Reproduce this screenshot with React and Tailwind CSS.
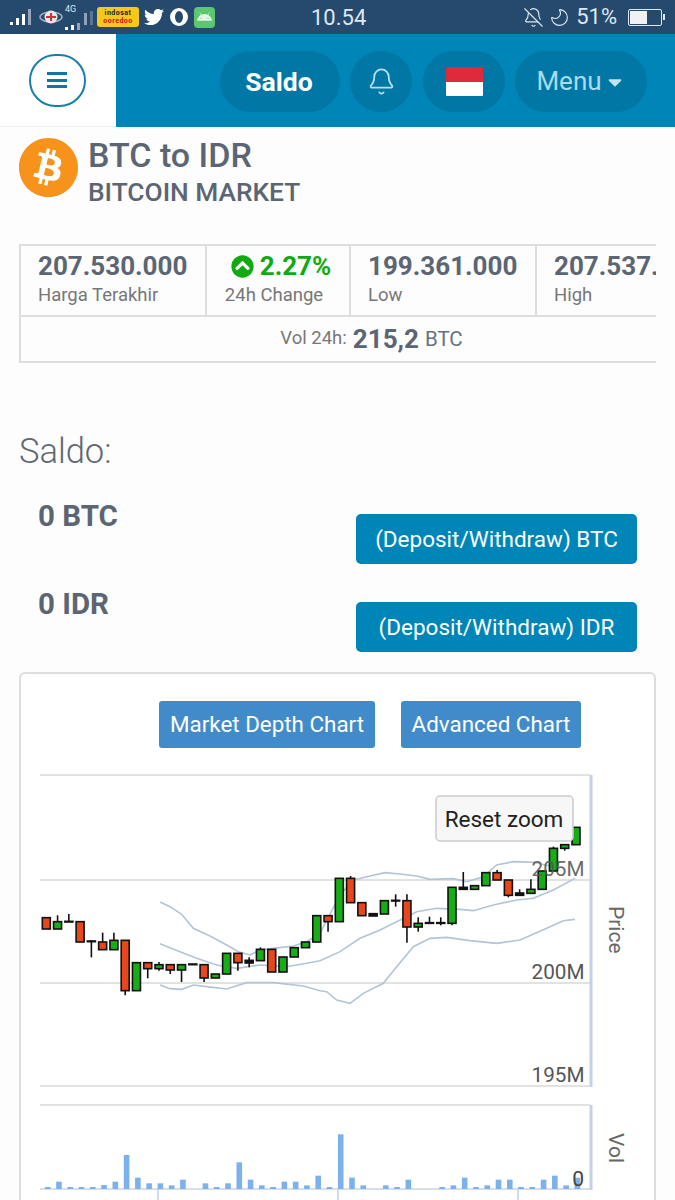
import React from "react";
import { Bell, BellOff, Moon } from "lucide-react";
import { FaAndroid, FaBitcoin, FaCaretDown, FaChevronCircleUp, FaTwitter } from "react-icons/fa";

const RED = "#e8461b";
const GREEN = "#17ad17";

// [body top, body bottom, wick top, wick bottom, color] in zoomed pixels, relative to y=770
const CANDLES = [
  [443, 477, 443, 477, RED],
  [455, 477, 436, 477, GREEN],
  [454, 456, 432, 456, "#111"],
  [455, 516, 455, 516, RED],
  [513, 515, 510, 562, "#111"],
  [516, 539, 488, 539, RED],
  [511, 539, 488, 539, GREEN],
  [511, 662, 511, 676, RED],
  [578, 662, 578, 662, GREEN],
  [578, 596, 578, 625, RED],
  [584, 596, 576, 602, GREEN],
  [584, 600, 584, 612, RED],
  [584, 600, 584, 636, GREEN],
  [582, 584, 582, 584, "#111"],
  [584, 624, 584, 636, RED],
  [612, 624, 612, 624, GREEN],
  [550, 612, 550, 612, GREEN],
  [550, 578, 550, 602, RED],
  [571, 579, 562, 592, "#111"],
  [538, 572, 532, 572, GREEN],
  [538, 606, 538, 606, RED],
  [561, 606, 561, 606, GREEN],
  [533, 561, 533, 561, GREEN],
  [516, 533, 516, 533, GREEN],
  [437, 516, 437, 516, GREEN],
  [437, 455, 437, 485, RED],
  [325, 455, 325, 455, GREEN],
  [325, 398, 318, 398, RED],
  [398, 437, 398, 437, RED],
  [431, 438, 431, 438, "#111"],
  [392, 432, 392, 432, GREEN],
  [391, 393, 373, 410, "#111"],
  [392, 471, 373, 518, RED],
  [460, 471, 442, 485, GREEN],
  [458, 460, 440, 460, "#111"],
  [458, 460, 442, 466, "#111"],
  [352, 460, 352, 466, GREEN],
  [352, 358, 306, 358, "#111"],
  [347, 358, 347, 358, GREEN],
  [308, 347, 308, 347, GREEN],
  [308, 330, 300, 330, RED],
  [330, 376, 330, 382, RED],
  [369, 376, 358, 376, "#111"],
  [358, 370, 328, 370, GREEN],
  [303, 358, 303, 358, GREEN],
  [235, 303, 230, 303, GREEN],
  [224, 235, 224, 242, GREEN],
  [172, 224, 172, 224, GREEN],
];

const VOLUMES = [
  6, 22, 6, 6, 6, 12, 22, 102, 34, 17, 17, 11, 28, 0, 17, 6, 17, 80, 28, 11, 6, 22, 22, 11,
  40, 6, 164, 34, 11, 0, 11, 6, 28, 0, 0, 6, 11, 34, 6, 11, 28, 28, 6, 6, 28, 40, 11, 34,
];

// first part of each band was read off the left crop, second part off the right crop
const left = (pts) => pts.map(([x, y]) => [20 + x / 3, 770 + y / 3]);
const right = (pts) => pts.map(([x, y]) => [320 + x / 3, 770 + y / 3]);
const toPoints = (pts) => pts.map((p) => p.join(",")).join(" ");

const BANDS = [
  [
    ...left([[420, 396], [450, 410], [485, 433], [520, 475], [570, 498], [620, 525], [655, 545], [690, 555], [720, 540], [760, 535], [820, 528], [860, 515], [900, 490]]),
    ...right([[60, 375], [100, 330], [150, 318], [195, 308], [240, 312], [290, 318], [330, 328], [400, 326], [440, 335], [490, 320], [530, 285], [580, 275], [640, 277], [700, 290]]),
  ],
  [
    ...left([[420, 521], [480, 545], [530, 565], [590, 585], [650, 595], [720, 585], [800, 590], [860, 580], [900, 572]]),
    ...right([[60, 545], [120, 505], [180, 480], [230, 455], [290, 425], [350, 415], [420, 418], [460, 422], [520, 405], [590, 390], [640, 385], [700, 360], [765, 325]]),
  ],
  [
    ...left([[420, 645], [450, 656], [485, 658], [520, 645], [560, 650], [620, 657], [680, 638], [760, 638], [850, 648], [900, 662]]),
    ...right([[20, 665], [50, 690], [90, 700], [130, 670], [190, 640], [230, 590], [280, 530], [330, 505], [380, 502], [450, 512], [530, 520], [600, 510], [680, 475], [730, 452], [765, 448]]),
  ],
];

const candleX = (i) => 46.3 + i * 11.27;

const Chart = () => (
  <svg width="620" height="430" viewBox="20 770 620 430" className="block" style={{ fontFamily: "Roboto, sans-serif" }}>
    {/* Price panel */}
    {[775, 880, 983, 1086].map((y) => (
      <line key={y} x1="40" x2="590" y1={y} y2={y} stroke="#d8d8d8" strokeWidth="1.5" />
    ))}
    <line x1="591" x2="591" y1="775" y2="1087" stroke="#c3d1e6" strokeWidth="3" />

    {BANDS.map((band, i) => (
      <polyline key={i} points={toPoints(band)} fill="none" stroke="#b2c4d8" strokeWidth="1.6" />
    ))}

    {CANDLES.map(([top, bottom, wickTop, wickBottom, color], i) => {
      const x = candleX(i);
      return (
        <g key={i}>
          <line x1={x} x2={x} y1={770 + wickTop / 3} y2={770 + wickBottom / 3} stroke="#111" strokeWidth="1.6" />
          <rect x={x - 4} y={770 + top / 3} width="8" height={(bottom - top) / 3} fill={color} stroke="#111" strokeWidth="1.6" />
        </g>
      );
    })}

    <text x="584.5" y="876" textAnchor="end" fontSize="20.7" fill="#555" fillOpacity="0.9">205M</text>
    <text x="584.5" y="979" textAnchor="end" fontSize="20.7" fill="#555">200M</text>
    <text x="584.5" y="1082" textAnchor="end" fontSize="20.7" fill="#555">195M</text>
    <text x="0" y="0" fontSize="21" fill="#666" transform="translate(609 906) rotate(90)">Price</text>

    <rect x="436" y="796" width="137" height="45" rx="4" fill="#f7f7f7" stroke="#cccccc" strokeWidth="1.5" />
    <text x="504" y="827" textAnchor="middle" fontSize="22.5" fill="#222">Reset zoom</text>

    {/* Volume panel */}
    <line x1="40" x2="590" y1="1105" y2="1105" stroke="#d8d8d8" strokeWidth="1.5" />
    <line x1="40" x2="590" y1="1189" y2="1189" stroke="#c9d3de" strokeWidth="1.5" />
    <line x1="591" x2="591" y1="1105" y2="1190" stroke="#c3d1e6" strokeWidth="3" />
    {[158, 338, 518].map((x) => (
      <line key={x} x1={x} x2={x} y1="1189" y2="1200" stroke="#c0d0e0" strokeWidth="1.5" />
    ))}
    {VOLUMES.map((h, i) => (
      <rect key={i} x={47.7 + i * 11.27 - 2.8} y={1189 - h / 3} width="5.6" height={h / 3} fill="#7cb2ec" />
    ))}
    <text x="584" y="1186" textAnchor="end" fontSize="21" fill="#444">0</text>
    <text x="0" y="0" fontSize="21" fill="#666" transform="translate(609 1133) rotate(90)">Vol</text>
  </svg>
);

const SignalBars = ({ heights, color = "white" }) => (
  <svg width={heights.length * 6} height="16" viewBox={`0 0 ${heights.length * 6} 16`}>
    {heights.map((h, i) => (
      <rect key={i} x={i * 6} y={16 - h} width="3" height={h} fill={color} fillOpacity={i === heights.length - 1 ? 0.5 : 1} />
    ))}
  </svg>
);

const StatusBar = () => (
  <div className="h-[34px] bg-[#26496e] flex items-center text-[#dfe8f0] relative">
    <div className="flex items-center pl-[10px] w-[260px]">
      <SignalBars heights={[3, 7, 11, 16]} />
      <svg width="24" height="24" viewBox="0 0 24 24" className="ml-[5px]">
        <ellipse cx="12" cy="12" rx="11" ry="5" fill="none" stroke="#9eb0c0" strokeWidth="1.5" />
        <circle cx="12" cy="12" r="6.5" fill="#e8e8e8" />
        <path d="M7 11h10v2H7zM11 8h2v8h-2z" fill="#d0303a" />
      </svg>
      <div className="ml-[2px] flex flex-col items-start leading-none">
        <span className="text-[9px] leading-[9px]">4G</span>
        <SignalBars heights={[3, 5, 7]} />
      </div>
      <span className="ml-[1px]">
        <SignalBars heights={[12, 14]} color="#8fa3b5" />
      </span>
      <div className="ml-[1px] w-[42px] h-[20px] bg-[#f6c81c] rounded-[3px] flex flex-col items-center justify-center font-bold text-[7px] leading-[8px] text-[#c8141e] tracking-[0.5px]">
        <span className="text-[#222]">indosat</span>
        <span>ooredoo</span>
      </div>
      <FaTwitter className="ml-[5px] text-white" size={20} />
      <span className="ml-[6px] w-[18px] h-[18px] rounded-full border-[3.5px] border-white block" style={{ borderLeftWidth: 5, borderRightWidth: 5 }} />
      <span className="ml-[6px] w-[21px] h-[21px] rounded-[4px] bg-[#5cc770] flex items-center justify-center">
        <FaAndroid className="text-[#e4f5e4]" size={15} />
      </span>
    </div>
    <span className="absolute left-[311px] top-[4px] text-[22px] leading-[28px]">10.54</span>
    <div className="ml-auto flex items-center pr-[10px]">
      <BellOff size={21} strokeWidth={1.3} />
      <Moon size={21} strokeWidth={1.3} className="ml-[5px] -scale-x-100" />
      <span className="ml-[6px] text-[22px] leading-[28px]">51%</span>
      <div className="ml-[11px] w-[34px] h-[17px] border border-[#dfe8f0] rounded-[2px] p-[1px]">
        <div className="h-full w-[17px] bg-[#eef2f5]" />
      </div>
      <span className="w-[2px] h-[6px] bg-[#dfe8f0] ml-[1px]" />
    </div>
  </div>
);

const NavBar = () => (
  <div className="h-[93px] flex">
    <div className="w-[116px] bg-white border-b border-[#eeeeee] flex items-center justify-center pr-[2px]">
      <div className="w-[57px] h-[53px] rounded-full border-2 border-[#1580ab] flex flex-col items-center justify-center gap-[3.5px]">
        <span className="block w-[20px] h-[3px] bg-[#0f77a5]" />
        <span className="block w-[20px] h-[3px] bg-[#0f77a5]" />
        <span className="block w-[20px] h-[3px] bg-[#0f77a5]" />
      </div>
    </div>
    <div className="flex-1 bg-[#0085b8] flex items-center pl-[104px] pt-[2px]">
      <div className="w-[120px] h-[61px] rounded-full bg-[#0077a5] flex items-center justify-center pr-[2px] text-white font-bold text-[26.5px]">
        Saldo
      </div>
      <div className="ml-[10px] w-[62px] h-[61px] rounded-full bg-[#0077a5] flex items-center justify-center text-[#b5e0f2]">
        <Bell size={29} strokeWidth={1.5} />
      </div>
      <div className="ml-[11px] w-[82px] h-[61px] rounded-full bg-[#0077a5] flex items-center justify-center">
        <div className="w-[37px] h-[29px] rounded-[1px] overflow-hidden flex flex-col">
          <div className="h-1/2 bg-[#dd2b3c]" />
          <div className="h-1/2 bg-white" />
        </div>
      </div>
      <div className="ml-[10px] w-[132px] h-[61px] rounded-full bg-[#0077a5] flex items-center justify-center text-[#a9dcf1] text-[26px]">
        Menu
        <FaCaretDown size={22} className="ml-[2px] text-[#c4e3f0]" />
      </div>
    </div>
  </div>
);

const Stat = ({ value, label, className }) => (
  <div className={`shrink-0 border-r-2 border-[#dddddd] pl-[17px] pt-[3px] ${className}`}>
    <div className="text-[26px] leading-[34px] font-bold text-[#5b6573] whitespace-nowrap">{value}</div>
    <div className="text-[18.5px] leading-[24px] text-[#777777]">{label}</div>
  </div>
);

const DepositRow = ({ amount, label, className }) => (
  <div className={`flex justify-between pr-[19px] ${className}`}>
    <div className="ml-[19px] -mt-[1px] text-[29.5px] leading-[34px] font-bold text-[#5b6573]">{amount}</div>
    <button className="w-[281px] h-[50px] mt-[14px] pt-[1px] rounded-[5px] bg-[#0085b8] text-white text-[22.5px]">{label}</button>
  </div>
);

export default function App() {
  return (
    <div className="w-[675px] h-[1200px] overflow-hidden bg-[#fdfdfd]" style={{ fontFamily: "Roboto, sans-serif" }}>
      <StatusBar />
      <NavBar />

      <div className="pl-[19px] pr-[19px]">
        {/* Market title */}
        <div className="flex pt-[10px]">
          <FaBitcoin size={61} className="-ml-[1px] text-[#f7931a] bg-white rounded-full" />
          <div className="ml-[9px] pt-[1px]">
            <div className="text-[34px] leading-[34px] font-medium text-[#5b6573]">BTC to IDR</div>
            <div className="text-[26.3px] leading-[40px] font-medium text-[#5b6573]">BITCOIN MARKET</div>
          </div>
        </div>

        {/* Market stats */}
        <div className="mt-[32px] h-[119px] border-2 border-r-0 border-[#dddddd] overflow-hidden">
          <div className="flex h-[71px] border-b-2 border-[#dddddd]">
            <Stat value="207.530.000" label="Harga Terakhir" className="w-[186px]" />
            <div className="shrink-0 w-[144px] border-r-2 border-[#dddddd] pt-[3px] text-center">
              <div className="flex items-center justify-center pl-[6px] text-[26px] leading-[34px] font-bold text-[#11aa11]">
                <FaChevronCircleUp size={23} className="mr-[6px]" />
                2.27%
              </div>
              <div className="pr-[8px] text-[18.5px] leading-[25px] text-[#777777]">24h Change</div>
            </div>
            <Stat value="199.361.000" label="Low" className="w-[186px]" />
            <Stat value="207.537.000" label="High" className="w-[186px]" />
          </div>
          <div className="h-[44px] pl-[66px] flex items-center justify-center text-[18.5px] text-[#777777]">
            Vol 24h:
            <span className="ml-[6px] text-[26px] font-bold text-[#5b6573]">215,2</span>
            <span className="ml-[6px] text-[20.5px] text-[#667080]">BTC</span>
          </div>
        </div>

        {/* Saldo */}
        <div className="mt-[66px] text-[34.5px] leading-[44px] font-light text-[#5f6872]">Saldo:</div>
        <DepositRow amount="0 BTC" label="(Deposit/Withdraw) BTC" className="mt-[27px]" />
        <DepositRow amount="0 IDR" label="(Deposit/Withdraw) IDR" className="mt-[24px]" />

        {/* Chart card */}
        <div className="mt-[20px] h-[600px] border-2 border-[#dddddd] rounded-[6px] bg-white">
          <div className="flex pl-[138px] pt-[27px] gap-[26px]">
            <button className="w-[216px] h-[47px] pt-[1px] rounded-[3px] bg-[#428bca] text-white text-[22.4px]">Market Depth Chart</button>
            <button className="w-[180px] h-[47px] pt-[1px] rounded-[3px] bg-[#428bca] text-white text-[22.4px]">Advanced Chart</button>
          </div>
          <div className="mt-[22px] -ml-[1px]">
            <Chart />
          </div>
        </div>
      </div>
    </div>
  );
}
